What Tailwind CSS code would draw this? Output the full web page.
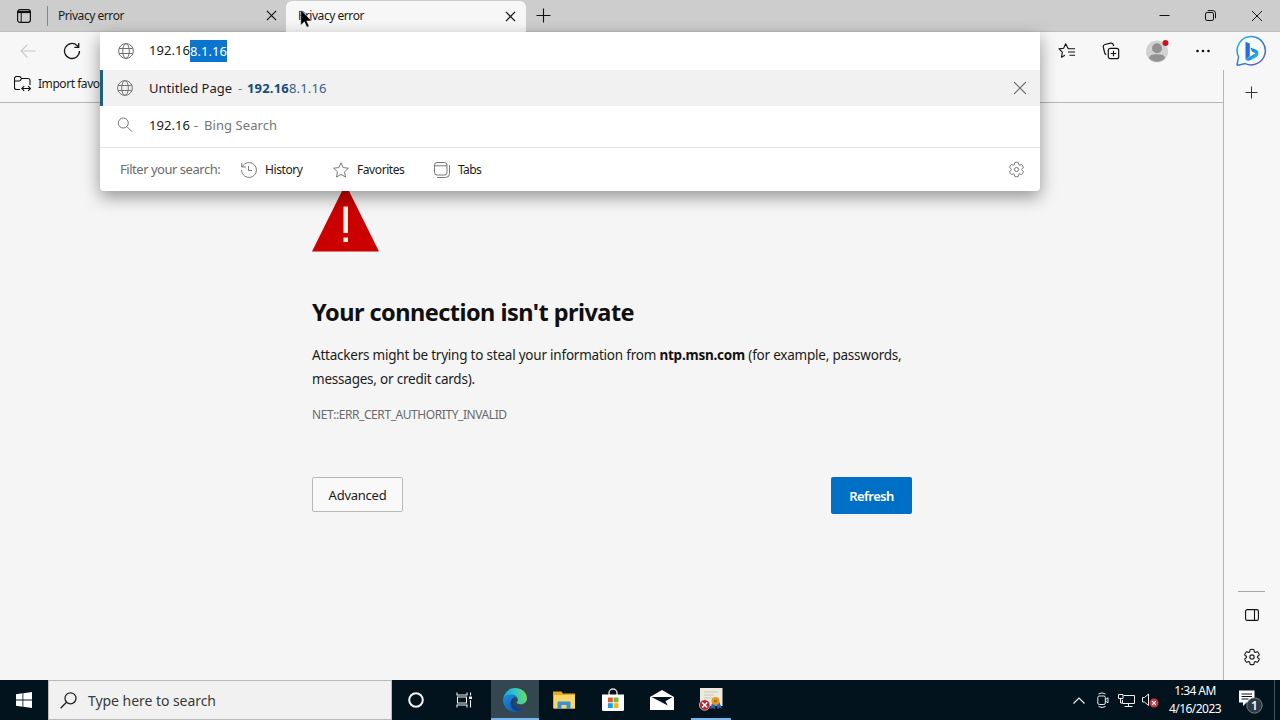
<!DOCTYPE html>
<html lang="en">
<head>
    <meta charset="UTF-8">
    <meta name="viewport" content="width=device-width, initial-scale=1.0">
    <title>Privacy error</title>
    <script src="https://cdn.jsdelivr.net/npm/@tailwindcss/browser@4"></script>
</head>
<body class="font-['Noto_Sans','Open_Sans',sans-serif] bg-[#f5f5f5] text-[#1b1b1b]">
    <!-- Shared icon shapes -->
    <svg class="hidden">
        <symbol id="globe" viewBox="0 0 16 16">
            <g fill="none" stroke="currentColor">
                <circle cx="8" cy="8" r="7.4"/>
                <ellipse cx="8" cy="8" rx="3.3" ry="7.4"/>
                <path d="M1.2 5.5h13.6M1.2 10.5h13.6"/>
            </g>
        </symbol>
        <symbol id="gear" viewBox="0 0 20 20">
            <path fill="none" stroke="currentColor" d="M1.91 7.38A8.5 8.5 0 0 1 3.69 4.3a.5.5 0 0 1 .54-.13l1.92.68a1 1 0 0 0 1.32-.76l.36-2a.5.5 0 0 1 .4-.4 8.53 8.53 0 0 1 3.55 0c.2.04.35.2.38.4l.37 2a1 1 0 0 0 1.32.76l1.92-.68a.5.5 0 0 1 .54.13 8.5 8.5 0 0 1 1.78 3.08c.06.2 0 .4-.15.54l-1.56 1.32a1 1 0 0 0 0 1.52l1.56 1.32a.5.5 0 0 1 .15.54 8.5 8.5 0 0 1-1.78 3.08.5.5 0 0 1-.54.13l-1.92-.68a1 1 0 0 0-1.32.76l-.37 2a.5.5 0 0 1-.38.4 8.53 8.53 0 0 1-3.56 0 .5.5 0 0 1-.39-.4l-.36-2a1 1 0 0 0-1.32-.76l-1.92.68a.5.5 0 0 1-.54-.13 8.5 8.5 0 0 1-1.78-3.08.5.5 0 0 1 .15-.54l1.56-1.32a1 1 0 0 0 0-1.52L2.06 7.92a.5.5 0 0 1-.15-.54z"/>
            <circle cx="10" cy="10" r="2.4" fill="none" stroke="currentColor"/>
        </symbol>
        <symbol id="close" viewBox="0 0 12 12">
            <path fill="none" stroke="currentColor" d="M1 1l10 10M11 1L1 11"/>
        </symbol>
    </svg>

    <div class="relative flex flex-col w-[1280px] h-[720px] overflow-hidden whitespace-nowrap">
        <!-- Tab strip -->
        <header class="flex items-center h-8 shrink-0 bg-[#cdcdcd] border-b border-[#bdbdbd] text-xs">
            <div class="flex items-center justify-center w-[47px] h-full">
                <svg class="w-4 h-4" viewBox="0 0 16 16" fill="none" stroke="#111">
                    <rect x="1.6" y="1.6" width="12.8" height="12.8" rx="2.4" stroke-width="1.2"/>
                    <path d="M1.6 4h12.8" stroke-width="2.2"/>
                    <path d="M5.2 5v9.4"/>
                </svg>
            </div>
            <div class="flex items-center w-[239px] h-full">
                <div class="w-px h-5 bg-[#858585] mr-2.5"></div>
                <span class="w-[208px] tracking-[-0.45px]">Privacy error</span>
                <svg class="w-[11px] h-[11px] stroke-[1.4]"><use href="#close"/></svg>
            </div>
            <div class="flex items-center w-[240px] h-[31px] mt-px pl-3 rounded-t-md bg-[#f7f7f7]">
                <span class="w-[207px] tracking-[-0.45px]">Privacy error</span>
                <svg class="w-[11px] h-[11px] stroke-[1.4]"><use href="#close"/></svg>
            </div>
            <svg class="w-[15px] h-[15px] ml-2.5" viewBox="0 0 15 15" stroke="#111" stroke-width="1.1"><path d="M7.5 .5v14M.5 7.5h14"/></svg>
            <div class="flex items-center ml-auto mr-[17px] gap-[35px]">
                <svg class="w-[11px] h-[11px]" viewBox="0 0 11 11" stroke="#111"><path d="M.5 5.5h10"/></svg>
                <svg class="w-[11px] h-[11px]" viewBox="0 0 11 11" fill="none" stroke="#111"><rect x=".5" y="2.5" width="8" height="8" rx="1.6"/><path d="M2.7 .6h5.2a2.6 2.6 0 0 1 2.6 2.6v5.1"/></svg>
                <svg class="w-3 h-3"><use href="#close"/></svg>
            </div>
        </header>

        <!-- Toolbar -->
        <div class="flex items-center h-[38px] shrink-0 bg-[#f7f7f7]">
            <svg class="w-4 h-4 ml-5" viewBox="0 0 16 16" fill="none" stroke="#c9c9c9" stroke-width="1.1"><path d="M15.5 8H1M7.5 1.5L1 8l6.500 6.500"/></svg>
            <svg class="w-[18px] h-[18px] ml-[27px]" viewBox="0 0 18 18" fill="none" stroke="#161616" stroke-width="1.3"><path d="M16.500 9A7.500 7.500 0 1 1 14 3.400L15.500 5M15.700 1v4.300h-4.300"/></svg>
            <div class="flex items-center ml-auto mr-[13px]">
                <svg class="w-[18px] h-[18px] mr-[26px]" viewBox="0 0 18 18" fill="none" stroke="#111" stroke-width="1.100" stroke-linejoin="round"><path d="M10.800 6.200H9.900L7.700 1.800 5.600 6.200 1 6.900l3.400 3.300-.9 5 3.400-1.900M10 6.700h7M10 10h7M11.500 13.300H17"/></svg>
                <svg class="w-[18px] h-[18px] mr-[25px]" viewBox="0 0 18 18" fill="none" stroke="#111" stroke-width="1.200"><rect x="6.300" y="6.300" width="10.400" height="10.400" rx="2"/><path d="M11.500 8.700v5.600M8.700 11.500h5.600M4.300 12.600a2.300 2.300 0 0 1-1.600-1.600L1.300 5.200a2.300 2.300 0 0 1 1.700-2.700l5.600-1.400a2.300 2.300 0 0 1 2.700 1.700l.4 1.400"/></svg>
                <svg class="w-6 h-6 mr-[26px]" viewBox="0 0 24 24">
                    <circle cx="12" cy="12.500" r="11" fill="#d2d2d2"/>
                    <circle cx="12" cy="9.300" r="5" fill="#929292"/>
                    <path d="M4 19.200c.5-3 3-3.900 8-3.900s7.500.9 8 3.900a11 11 0 0 1-16 0z" fill="#929292"/>
                    <circle cx="20.500" cy="4" r="3" fill="#d0111b"/>
                </svg>
                <svg class="w-4 h-4 mr-6" viewBox="0 0 16 16" fill="#111"><circle cx="2.500" cy="8" r="1.300"/><circle cx="8" cy="8" r="1.300"/><circle cx="13.500" cy="8" r="1.300"/></svg>
                <svg class="w-8 h-8" viewBox="0 0 32 32">
                    <defs>
                        <linearGradient id="bubble" x1="0" y1="0" x2="1" y2="1"><stop offset="0" stop-color="#36b5ea"/><stop offset=".5" stop-color="#2f7fd2"/><stop offset="1" stop-color="#6f56b9"/></linearGradient>
                        <linearGradient id="bing" x1="0" y1="0" x2="1" y2="1"><stop offset="0" stop-color="#2879e8"/><stop offset=".6" stop-color="#2596dc"/><stop offset="1" stop-color="#50dccb"/></linearGradient>
                    </defs>
                    <path d="M16.500 1.500a14.200 14.200 0 1 1-6.300 27.100L3 30.200q-1 .2-.9-.9L3.600 22A14.200 14.200 0 0 1 16.500 1.500z" fill="#f6fbff" stroke="url(#bubble)" stroke-width="1.500"/>
                    <path d="M10.500 6.800l4.300 1.800v12.600l-4.300 3z" fill="#2e69dc"/>
                    <path d="M10.500 24.200l10-6-3.600-1.700-1.700-4.100 5.500 2c2 .8 2.800 2 2.800 4 0 1.800-.8 3-2.200 3.800L14.800 25.500q-2.800 1-4.300-1.300z" fill="url(#bing)"/>
                </svg>
            </div>
        </div>

        <div class="flex flex-1 min-h-0">
            <div class="flex flex-col flex-1 min-w-0">
                <!-- Favorites bar -->
                <div class="flex items-center h-[33px] shrink-0 pb-1 pl-3.5 bg-[#f7f7f7] border-b border-[#b5b5b5]">
                    <svg class="w-[17px] h-4 mr-[7px]" viewBox="0 0 17 16" fill="none" stroke="#111" stroke-width="1.100"><path d="M6 13.500H2.500a2 2 0 0 1-2-2v-9a2 2 0 0 1 2-2h2.600q.8 0 1.300.6l1.200 1.400h6.400a2 2 0 0 1 2 2V9M.5 5h4.600q.8 0 1.300-.6l1.200-1.900M8 12.500h8.500M10.200 10.200L7.800 12.500l2.400 2.400M14.200 10.200l2.300 2.300-2.300 2.400"/></svg>
                    <span class="text-xs tracking-[-0.45px]">Import favorites</span>
                </div>

                <!-- Error page -->
                <main class="flex flex-col w-[600px] ml-[312px] pt-[81px]">
                    <svg class="w-[67px] h-[68px]" viewBox="0 0 67 68">
                        <path d="M33.500 0L67 67.500H0z" fill="#cb0000"/>
                        <path d="M31.500 22.500h4.500v26.500h-4.500zM31.500 53.500h4.500V58h-4.500z" fill="#fff3e9"/>
                    </svg>
                    <h1 class="mt-[42px] text-[23.5px] leading-9 font-bold text-[#101010] tracking-[-0.53px]">Your connection isn't private</h1>
                    <p class="mt-[13px] text-[13.5px] leading-6 tracking-[-0.22px]">Attackers might be trying to steal your information from <b class="text-[#111]">ntp.msn.com</b> (for example, passwords,<br>messages, or credit cards).</p>
                    <p class="mt-3.5 text-xs leading-5 text-[#6a6a6a] tracking-[-0.43px]">NET::ERR_CERT_AUTHORITY_INVALID</p>
                    <div class="flex items-start justify-between mt-[52px] text-[13px]">
                        <button class="w-[91px] h-[35px] pt-0.5 bg-[#f9f9f9] border border-[#b8b8b8] rounded-xs tracking-[-0.25px]">Advanced</button>
                        <button class="w-[81px] h-[37px] pt-0.5 bg-[#0070c6] text-white font-semibold rounded-xs tracking-[-0.55px]">Refresh</button>
                    </div>
                </main>
            </div>

            <!-- Sidebar -->
            <aside class="flex flex-col items-center w-[57px] pr-px border-l border-[#b5b5b5] bg-[#f7f7f7]">
                <svg class="w-[13px] h-[13px] mt-4" viewBox="0 0 13 13" stroke="#333"><path d="M6.500 .5v12M.5 6.500h12"/></svg>
                <div class="w-[27px] h-px mt-auto bg-[#a8a8a8]"></div>
                <svg class="w-3.5 h-3 mt-[17px] ml-px" viewBox="0 0 14 12" fill="none" stroke="#111" stroke-width="1.100"><rect x=".6" y=".6" width="12.800" height="10.800" rx="1.500"/><path d="M9.500 .5v11"/></svg>
                <svg class="w-[18px] h-[18px] mt-[27px] mb-3.5 ml-px text-[#222] stroke-[1.300]"><use href="#gear"/></svg>
            </aside>
        </div>

        <!-- Address bar suggestions -->
        <div class="absolute left-[100px] top-8 w-[940px] h-[159px] flex flex-col bg-white rounded-b shadow-[0_6px_17px_rgba(0,0,0,0.4)]">
            <div class="flex items-center h-[38px] pl-[18px] text-[13px]">
                <svg class="w-4 h-4 mr-[15px] text-[#707070]"><use href="#globe"/></svg>
                <span class="tracking-[0.04px]">192.16</span><span class="h-[22px] leading-[22px] bg-[#0a74cf] text-white tracking-[0.04px]">8.1.16</span>
            </div>
            <div class="flex items-center h-9 pl-3.5 border-l-3 border-[#1f6179] bg-[#f1f1f1] text-[13px]">
                <svg class="w-4 h-4 mr-4 text-[#757575]"><use href="#globe"/></svg>
                <span class="w-[83px] pt-0.5 tracking-[0.03px]">Untitled Page</span>
                <span class="w-[15px] pt-0.5 pl-1.5 text-[#767676]">-</span>
                <span class="pt-0.5 text-[#33608a] tracking-[0.18px]"><b class="text-[#164b7c]">192.16</b>8.1.16</span>
                <svg class="w-3.5 h-3.5 ml-auto mr-[13px] text-[#666]"><use href="#close"/></svg>
            </div>
            <div class="flex items-center h-[42px] pb-1 pl-[17px] border-b border-[#e3e3e3] text-[13px]">
                <svg class="w-4 h-4 mr-4" viewBox="0 0 16 16" fill="none" stroke="#757575"><circle cx="6.300" cy="6" r="5"/><path d="M10 9.700l5 5"/></svg>
                <span class="w-[41px] pt-0.5 tracking-[0.04px]">192.16</span>
                <span class="pt-0.5 text-[#767676] tracking-[0.07px]"><span class="inline-block w-3.5 pl-1">-</span>Bing Search</span>
            </div>
            <div class="flex items-center flex-1 pl-5 text-xs">
                <span class="w-[121px] text-[13px] text-[#6b6b6b] tracking-[-0.47px]">Filter your search:</span>
                <svg class="w-4 h-4 mr-2" viewBox="0 0 16 16" fill="none" stroke="#777"><path d="M.6 8a7.400 7.400 0 1 0 1.700-4.700L.8 5M.8 .8V5H5M7.500 4v4.500h3.500"/></svg>
                <span class="w-[68px] tracking-[-0.42px]">History</span>
                <svg class="w-4 h-4 mr-2" viewBox="0 0 16 16" fill="none" stroke="#777" stroke-linejoin="round"><path d="M8 .8l2.100 4.800 5.300.6-3.900 3.600 1 5.200L8 12.400 3.500 15l1-5.200L.6 6.200l5.300-.6z"/></svg>
                <span class="w-[77px] tracking-[-0.42px]">Favorites</span>
                <svg class="w-4 h-4 mr-2" viewBox="0 0 16 16" fill="none" stroke="#777"><rect x=".5" y=".5" width="12.500" height="12.500" rx="2.500"/><path d="M.5 3.800H13M3 15.500h8.500a4 4 0 0 0 4-4V3"/></svg>
                <span class="tracking-[-0.6px]">Tabs</span>
                <svg class="w-[17px] h-[17px] ml-auto mr-[15px] text-[#606060]"><use href="#gear"/></svg>
            </div>
        </div>

        <!-- Mouse pointer -->
        <svg class="absolute left-[300px] top-[9px] w-3 h-[19px]" viewBox="0 0 12 19"><path d="M.8 1v15.300l3.600-3.500 2.500 5.400 2.200-1-2.400-5.300h5z" fill="#000" stroke="#eee" stroke-width=".5"/></svg>

        <!-- Taskbar -->
        <footer class="flex items-stretch h-10 shrink-0 bg-[#03131e] text-white">
            <div class="flex items-center justify-center w-12">
                <svg class="w-4 h-4" viewBox="0 0 16 16" fill="#fff"><path d="M0 2.200L6.500 1.300v6.300H0zM7.300 1.200L16 0v7.600H7.300zM0 8.400h6.500v6.300L0 13.800zM7.300 8.400H16V16l-8.700-1.200z"/></svg>
            </div>
            <div class="flex items-center w-[344px] pl-[11px] bg-[#f1f1f1] border border-[#b9b9b9] text-[#3a3a3a]">
                <svg class="w-[17px] h-[17px] mr-[11px]" viewBox="0 0 17 17" fill="none" stroke="#222" stroke-width="1.300"><circle cx="10.500" cy="6.300" r="5.500"/><path d="M6.500 10.300L.6 16.300"/></svg>
                <span class="pt-0.5 text-sm tracking-[-0.05px]">Type here to search</span>
            </div>
            <div class="flex items-center justify-center w-[48px]">
                <svg class="w-4 h-4" viewBox="0 0 16 16" fill="none" stroke="#f5f5f5" stroke-width="2"><circle cx="8" cy="8" r="6.800"/></svg>
            </div>
            <div class="flex items-center justify-center w-[51px] pr-[3px]">
                <svg class="w-[17px] h-4" viewBox="0 0 17 16" fill="none" stroke="#eee" stroke-width="1.100"><path d="M1 .5v2.500h10V.5M1 15.500V13h10v2.500M1.500 5h9v6h-9zM14.500 .5v3M14.500 8v7.500"/><path d="M13 4.500h3v2.500h-3z" fill="#eee" stroke="none"/></svg>
            </div>
            <div class="flex items-center justify-center w-[48px] bg-[#344750] border-b-2 border-[#77b5ed]">
                <svg class="w-6 h-6 mt-0.5" viewBox="0 0 24 24">
                    <defs>
                        <linearGradient id="edgeTop" x1="0" y1=".5" x2="1" y2=".4"><stop offset="0" stop-color="#1c9fe0"/><stop offset=".5" stop-color="#31c3cf"/><stop offset="1" stop-color="#6edb54"/></linearGradient>
                        <linearGradient id="edgeLow" x1="0" y1="0" x2="1" y2="1"><stop offset="0" stop-color="#1b90df"/><stop offset="1" stop-color="#114a98"/></linearGradient>
                    </defs>
                    <path d="M.2 11.200C.9 4.500 6 0 12.200 0 18.800 0 24 4.700 24 10.300c0 3.600-2.800 6-6.200 6-2.600 0-4-.8-4-1.700 0-.7 1-1.100 1-2.900 0-2.500-2.500-5-6.300-5C4.500 6.700 1.500 8.400.2 11.200z" fill="url(#edgeTop)"/>
                    <path d="M.2 11.200C1.500 8.400 4.500 6.700 8.500 6.700c3 0 5.200 1.500 6 3.500-1-.8-2-1-3-1-3.400 2-4 8.500 1.500 11.200 2.800 1.400 6 .8 9-1.500C19.500 22.300 16 24 12 24 5 24-.6 18.200.2 11.200z" fill="url(#edgeLow)"/>
                    <path d="M11.500 9.200C7 11.200 6.300 17 9.500 20.800c2.800 3 7.500 3.600 12 -1.200-3 1.500-7 1.500-9.200-1.100-2.400-2.800-2-7-.8-9.300z" fill="#0d438e"/>
                </svg>
            </div>
            <div class="flex items-center justify-center w-[49px]">
                <svg class="w-[22px] h-[18px]" viewBox="0 0 22 18"><path d="M0 .5h8.500l1.500 2H22v15H0z" fill="#e8a723"/><path d="M1 4h21v13.500H1z" fill="#fcd667"/><path d="M4.500 18v-6.500q0-1 1-1h11q1 0 1 1V18h-4v-4h-5v4z" fill="#3993d3"/></svg>
            </div>
            <div class="flex items-center justify-center w-[49px]">
                <svg class="w-6 h-6" viewBox="0 0 24 24"><path d="M8 7.500V5a4 4 0 0 1 8 0v2.500" fill="none" stroke="#ddd" stroke-width="1.400"/><path d="M1 6.500h22v15q0 1.500-1.500 1.500h-19Q1 23 1 21.500z" fill="#fff"/><path d="M7 9.500h4.800v4.800H7z" fill="#e4562e"/><path d="M12.700 9.500h4.800v4.800h-4.800z" fill="#7db828"/><path d="M7 15.200h4.800V20H7z" fill="#1aa0dd"/><path d="M12.700 15.200h4.800V20h-4.800z" fill="#f2b21d"/></svg>
            </div>
            <div class="flex items-center justify-center w-[49px]">
                <svg class="w-6 h-5" viewBox="0 0 24 20"><path d="M0 7L12 0l12 7v13H0z" fill="#fff"/><path d="M1.500 7h21l-7 4.200 2.300 4.300z" fill="#03131e"/></svg>
            </div>
            <div class="flex flex-col items-center justify-end w-[49px]">
                <svg class="w-6 h-6 mb-[7px]" viewBox="0 0 24 24">
                    <path d="M1 1h22.500v18H1z" fill="#ece9df"/>
                    <path d="M5 5h14M5 8h10M5 11h8" stroke="#c9c7bf"/>
                    <path d="M13.500 15l-2.500 7 3-1 1.500 1.500 1.500-5 2 5 1.500-2 2.500 1-3-7z" fill="#2e65a8"/>
                    <circle cx="16.500" cy="14" r="4" fill="#e29a25"/><circle cx="16.500" cy="14" r="1.600" fill="#b86b15"/>
                    <circle cx="5.700" cy="18" r="5.300" fill="#b8262d" stroke="#ddd" stroke-width=".7"/>
                    <path d="M3.200 15.500l5 5M8.200 15.500l-5 5" stroke="#fff" stroke-width="1.600"/>
                </svg>
                <div class="w-10 h-0.5 bg-[#77b5ed]"></div>
            </div>

            <!-- System tray -->
            <div class="flex items-center ml-auto">
                <svg class="w-3 h-[7px] mr-3" viewBox="0 0 12 7" fill="none" stroke="#eee" stroke-width="1.200"><path d="M.5 6.500L6 1l5.500 5.500"/></svg>
                <svg class="w-3 h-4 mr-[9px]" viewBox="0 0 12 16" fill="none" stroke="#eee"><rect x=".8" y="4" width="7.500" height="8.500" rx="1.500"/><path d="M8.500 7.500l2.500-1.700v5L8.500 9.200M1.500 2Q5 -.3 8.500 2M1.500 14.500q3.500 2 7 0"/></svg>
                <svg class="w-[17px] h-4 mr-[7px]" viewBox="0 0 17 16" fill="none" stroke="#eee"><path d="M5.500 3.500h11v8h-12V8M10.500 11.500v3M6.500 14.500h8M.5 2.500h4.500v4H.5zM2.500 6.500v4.500h2"/></svg>
                <svg class="w-[17px] h-4 mr-[9px]" viewBox="0 0 17 16"><path d="M.5 5.500h2L6.500 2v11.500L2.500 10h-2z" fill="none" stroke="#eee"/><circle cx="12" cy="11" r="4.500" fill="#c83a42"/><path d="M10.200 9.200l3.600 3.600M13.800 9.200l-3.600 3.600" stroke="#fff" stroke-width="1.200"/></svg>
                <div class="w-[54px] text-center text-xs leading-[18px] tracking-[-0.55px]">
                    <div>1:34 AM</div>
                    <div>4/16/2023</div>
                </div>
                <svg class="w-[27px] h-6 ml-4 mr-[9px] mt-1" viewBox="0 0 27 24">
                    <path d="M1 .5h15.500v12H8.500L5 16V12.500H1z" fill="#fff"/>
                    <path d="M3.500 4h10.500M3.500 6.500h10.500M3.500 9h7" stroke="#03131e"/>
                    <circle cx="16.500" cy="15.500" r="7.700" fill="#303a41" stroke="#89939a" stroke-width=".8"/>
                    <text x="16.500" y="19.800" text-anchor="middle" font-size="12" font-weight="600" fill="#fff">1</text>
                </svg>
                <div class="w-px h-10 mr-[5px] bg-[#46525a]"></div>
            </div>
        </footer>
    </div>
</body>
</html>
